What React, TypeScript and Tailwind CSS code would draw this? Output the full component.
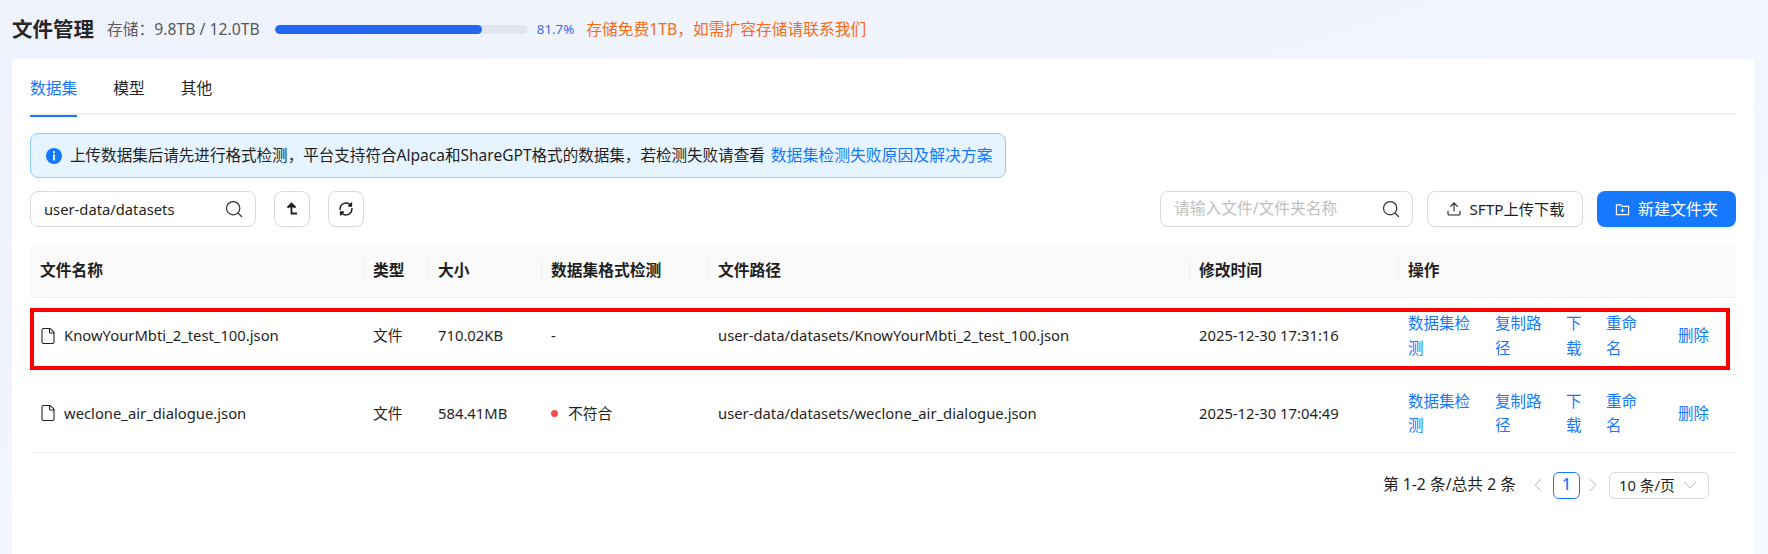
import { ChevronDown, ChevronLeft, ChevronRight, File, Search, Upload } from "lucide-react";

const fontStack = "font-['Noto_Sans','Noto_Sans_CJK_SC',sans-serif]";

const rows = [
  {
    name: "KnowYourMbti_2_test_100.json",
    size: "710.02KB",
    check: "-",
    path: "user-data/datasets/KnowYourMbti_2_test_100.json",
    time: "2025-12-30 17:31:16",
  },
  {
    name: "weclone_air_dialogue.json",
    size: "584.41MB",
    check: "不符合",
    path: "user-data/datasets/weclone_air_dialogue.json",
    time: "2025-12-30 17:04:49",
  },
];

const headers = ["文件名称", "类型", "大小", "数据集格式检测", "文件路径", "修改时间", "操作"];

function Actions() {
  return (
    <div className="flex items-center text-[15.5px] text-[#1677ff]">
      <span className="w-[64px] mr-[23px]">数据集检测</span>
      <span className="w-[48px] mr-[23px]">复制路径</span>
      <span className="w-[17px] mr-[23px]">下载</span>
      <span className="w-[33px] mr-[39px]">重命名</span>
      <span className="shrink-0">删除</span>
    </div>
  );
}

export default function App() {
  return (
    <div className={`${fontStack} w-[1768px] h-[554px] overflow-hidden bg-gradient-to-br from-[#eef2fc] to-[#f6f9ff] text-[15.75px] text-[#1f1f1f]`}>
      <header className="h-[59px] pl-3 flex items-center">
        <h1 className="text-[20.5px] font-bold text-[#262626] w-[82px] whitespace-nowrap">文件管理</h1>
        <span className="ml-[13px] text-[15.75px] text-[#595959] whitespace-nowrap">{"存储\uFF1A9.8TB / 12.0TB"}</span>
        <div className="ml-[15px] w-[253px] h-[9px] rounded-full bg-[#e2e6f0] overflow-hidden">
          <div className="h-full w-[207px] rounded-full bg-[#2468f2]" />
        </div>
        <span className="ml-[9px] text-[13.3px] text-[#4169f0]">81.7%</span>
        <span className="ml-[12px] text-[15.75px] text-[#fa6a14] whitespace-nowrap">{"存储免费1TB\uFF0C如需扩容存储请联系我们"}</span>
      </header>

      <main className="ml-3 w-[1742px] h-[495px] bg-white px-[18px]">
        <nav className="flex gap-[36px] h-[56px] border-b-2 border-[#f0f0f0] text-[15.75px]">
          <span className="relative h-[56px] pt-[18px] text-[#1677ff]">
            数据集
            <span className="absolute left-0 right-0 bottom-[-2px] h-[2px] bg-[#1677ff]" />
          </span>
          <span className="pt-[18px]">模型</span>
          <span className="pt-[18px]">其他</span>
        </nav>

        <div className="mt-[18px] w-[976px] h-[45px] flex items-center rounded-lg border border-[#91caff] bg-[#e6f4ff] pl-[15px] whitespace-nowrap text-[15.55px]">
          <svg viewBox="0 0 16 16" className="w-[16px] h-[16px] mr-[8px] shrink-0">
            <circle cx="8" cy="8" r="8" fill="#1677ff" />
            <rect x="7.1" y="3.2" width="1.8" height="1.8" fill="#fff" />
            <rect x="7.1" y="6.3" width="1.8" height="6.2" fill="#fff" />
          </svg>
          <span>{"上传数据集后请先进行格式检测\uFF0C平台支持符合Alpaca和ShareGPT格式的数据集\uFF0C若检测失败请查看"}</span>
          <span className="ml-[6px] text-[15.85px] text-[#1677ff]">数据集检测失败原因及解决方案</span>
        </div>

        <div className="mt-[13px] h-[36px] flex items-center">
          <div className="w-[226px] h-full flex items-center justify-between rounded-lg border border-[#d9d9d9] pl-[13px] pr-[11px] text-[14.75px]">
            <span>user-data/datasets</span>
            <Search size={20} strokeWidth={1.5} className="text-[#333]" />
          </div>
          <button className="ml-[18px] w-[36px] h-full flex items-center justify-center rounded-lg border border-[#d9d9d9] shadow-[0_1px_1px_rgba(0,0,0,0.03)]">
            <svg viewBox="0 0 16 16" className="w-[16px] h-[16px]" fill="none" stroke="#1f1f1f" strokeWidth="1.8">
              <path d="M3.5 6.5 7.5 2.5 11.5 6.5" fill="#1f1f1f" />
              <path d="M7.5 4V12.5H13" />
            </svg>
          </button>
          <button className="ml-[18px] w-[36px] h-full flex items-center justify-center rounded-lg border border-[#d9d9d9] shadow-[0_1px_1px_rgba(0,0,0,0.03)]">
            <svg viewBox="0 0 16 16" className="w-[16px] h-[16px]" fill="none" stroke="#1f1f1f" strokeWidth="1.5">
              <path d="M2.2 8.8A5.9 5.9 0 0 1 12.4 4" />
              <path d="M13.8 7.2A5.9 5.9 0 0 1 3.6 12" />
              <path d="M13.4 1.6V4.9H10.2" fill="#1f1f1f" />
              <path d="M2.6 14.4V11.1H5.8" fill="#1f1f1f" />
            </svg>
          </button>

          <div className="ml-auto w-[253px] h-full flex items-center justify-between rounded-lg border border-[#d9d9d9] pl-[13px] pr-[11px] text-[15.75px]">
            <span className="text-[#bfbfbf]">请输入文件/文件夹名称</span>
            <Search size={20} strokeWidth={1.5} className="text-[#333]" />
          </div>
          <button className="ml-[14px] w-[156px] h-full flex items-center justify-center gap-[8px] rounded-lg border border-[#d9d9d9] text-[15.25px] shadow-[0_1px_1px_rgba(0,0,0,0.03)]">
            <Upload size={16} strokeWidth={1.6} />
            SFTP上传下载
          </button>
          <button className="ml-[14px] w-[139px] h-full flex items-center justify-center gap-[8px] rounded-lg bg-[#1677ff] text-white text-[16px] shadow-[0_2px_0_rgba(5,145,255,0.1)]">
            <svg viewBox="0 0 16 16" className="w-[15px] h-[15px]" fill="none" stroke="#fff" strokeWidth="1.2">
              <path d="M1.5 3h4.6l1.5 1.7h6.9v8.8h-13z" />
              <path d="M8 7v4M6 9h4" />
            </svg>
            新建文件夹
          </button>
        </div>

        <div className="relative mt-[18px] w-[1706px]">
          <table className="w-full table-fixed border-collapse">
            <colgroup>
              <col className="w-[333px]" />
              <col className="w-[65px]" />
              <col className="w-[113px]" />
              <col className="w-[167px]" />
              <col className="w-[481px]" />
              <col className="w-[209px]" />
              <col />
            </colgroup>
            <thead>
              <tr className="h-[52px] bg-[#fafafa] border-b border-[#f0f0f0]">
                {headers.map((header, index) => (
                  <th
                    key={header}
                    className={`relative px-[10px] text-left font-bold text-[15.75px] ${index === 0 ? "rounded-tl-lg" : ""} ${index === 6 ? "rounded-tr-lg" : ""}`}
                  >
                    {index > 0 && <span className="absolute left-0 top-[13px] h-[26px] w-px bg-[#f0f0f0]" />}
                    {header}
                  </th>
                ))}
              </tr>
            </thead>
            <tbody className="text-[14.8px] leading-[24.75px]">
              {rows.map((row) => (
                <tr key={row.name} className="h-[77.5px] border-b border-[#f0f0f0]">
                  <td className="px-[10px]">
                    <div className="flex items-center gap-[7px]">
                      <File size={18} strokeWidth={1.4} className="shrink-0 -ml-[1px]" />
                      <span>{row.name}</span>
                    </div>
                  </td>
                  <td className="px-[10px]">文件</td>
                  <td className="px-[10px]">{row.size}</td>
                  <td className="px-[10px]">
                    {row.check === "-" ? (
                      "-"
                    ) : (
                      <div className="flex items-center gap-[10px]">
                        <span className="w-[7px] h-[7px] rounded-full bg-[#ff4d4f]" />
                        {row.check}
                      </div>
                    )}
                  </td>
                  <td className="px-[10px]">{row.path}</td>
                  <td className="px-[10px]">{row.time}</td>
                  <td className="pl-[10px] pr-0">
                    <Actions />
                  </td>
                </tr>
              ))}
            </tbody>
          </table>
          {/* annotation drawn over the first row */}
          <div className="absolute left-0 top-[63px] right-[6px] h-[62px] border-4 border-[#ff0000] pointer-events-none" />
        </div>

        <div className="mt-[19px] w-[1679px] h-[27px] flex items-center justify-end text-[15.75px]">
          <span className="whitespace-nowrap">第 1-2 条/总共 2 条</span>
          <ChevronLeft size={22} strokeWidth={1.1} className="ml-[11px] text-[#bfbfbf]" />
          <span className="ml-[4px] w-[27px] h-[27px] flex items-center justify-center rounded-md border border-[#1677ff] font-medium text-[#1677ff]">1</span>
          <ChevronRight size={22} strokeWidth={1.1} className="ml-[2px] text-[#bfbfbf]" />
          <div className="ml-[5px] w-[100px] h-[27px] flex items-center justify-between rounded-md border border-[#d9d9d9] pl-[9px] pr-[7px] text-[14.75px]">
            <span className="whitespace-nowrap">10 条/页</span>
            <ChevronDown size={22} strokeWidth={1.1} className="text-[#bfbfbf]" />
          </div>
        </div>
      </main>
    </div>
  );
}
